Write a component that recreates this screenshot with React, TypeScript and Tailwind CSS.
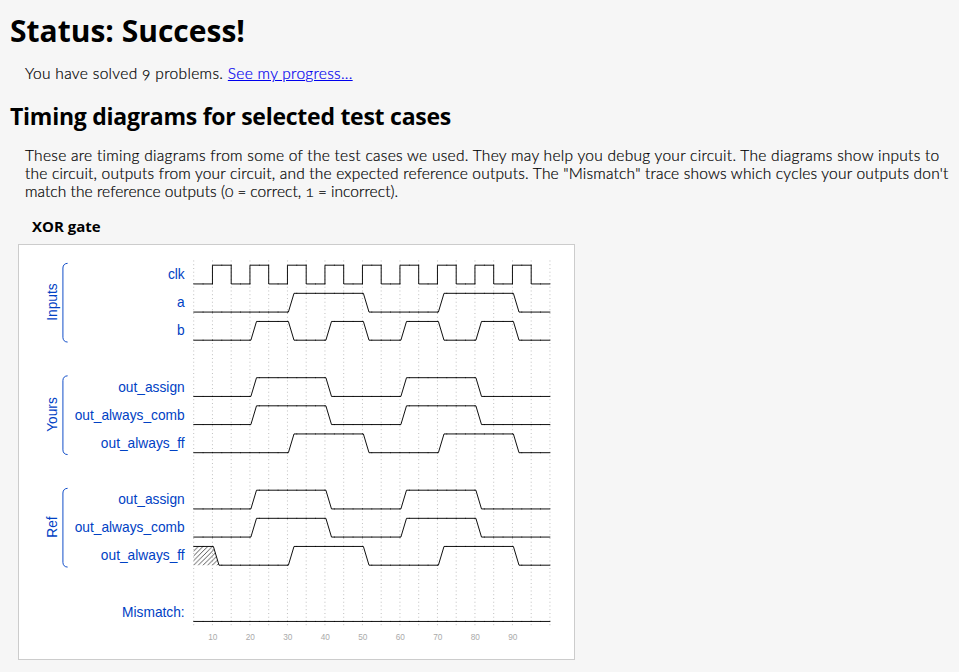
import React from "react";

type Trace = { label: string; row: number; highs: [number, number][]; clock?: boolean; unknownUntil?: number };

const CELLS = 19;

const clockHighs: [number, number][] = [1, 3, 5, 7, 9, 11, 13, 15, 17].map((n) => [n, n + 1]);
const assignHighs: [number, number][] = [[3, 7], [11, 15]];
const ffHighs: [number, number][] = [[5, 9], [13, 17]];

const traces: Trace[] = [
  { label: "clk", row: 0, highs: clockHighs, clock: true },
  { label: "a", row: 1, highs: ffHighs },
  { label: "b", row: 2, highs: [[3, 5], [7, 9], [11, 13], [15, 17]] },
  { label: "out_assign", row: 4, highs: assignHighs },
  { label: "out_always_comb", row: 5, highs: assignHighs },
  { label: "out_always_ff", row: 6, highs: ffHighs },
  { label: "out_assign", row: 8, highs: assignHighs },
  { label: "out_always_comb", row: 9, highs: assignHighs },
  { label: "out_always_ff", row: 10, highs: ffHighs, unknownUntil: 1 },
  { label: "Mismatch:", row: 12, highs: [] },
];

const groups = [
  { label: "Inputs", row: 0 },
  { label: "Yours", row: 4 },
  { label: "Ref", row: 8 },
];

// Each cell is 20 units wide and is built from two 10-unit bricks.
function bricks(t: Trace): string[] {
  const high = (c: number) =>
    (t.unknownUntil !== undefined && c < t.unknownUntil) || t.highs.some(([s, e]) => c >= s && c < e);
  const out: string[] = [];
  for (let c = 0; c < CELLS; c++) {
    const x = c * 20;
    const y = high(c) ? 0 : 20;
    const before = c > 0 ? (high(c - 1) ? 0 : 20) : y;
    if (before === y) out.push(`M${x},${y}h10`);
    else if (t.clock) out.push(`M${x},${before}V${y}h10`);
    else out.push(`M${x},${before}h1L${x + 7},${y}h3`);
    out.push(`M${x + 10},${y}h10`);
  }
  return out;
}

function TimingDiagram() {
  return (
    <svg width="555" height="414" viewBox="0 0 555 414" className="block font-['Liberation_Sans',Arial,sans-serif]">
      <defs>
        <pattern id="hatch" width="5" height="5" patternUnits="userSpaceOnUse">
          <path d="M-1,6 6,-1 M-1,1 1,-1 M4,6 6,4" stroke="#000" strokeWidth="0.7" />
        </pattern>
      </defs>
      <g transform="translate(174.7 20.2) scale(0.9375)">
        {Array.from({ length: CELLS + 1 }, (_, i) => (
          <path key={i} d={`M${i * 20},-5V385`} stroke="#888" strokeWidth="0.6" strokeDasharray="1,3" />
        ))}
        {Array.from({ length: 9 }, (_, i) => (
          <text key={i} x={20.3 + i * 40} y="399.5" textAnchor="middle" fontSize="8.8" fill="#aaa">
            {(i + 1) * 10}
          </text>
        ))}
        {traces.map((t) => (
          <g key={t.row} transform={`translate(0 ${t.row * 30})`}>
            <text x="-9.6" y="14.76" textAnchor="end" fontSize="14.667" fill="#0041c4">
              {t.label}
            </text>
            {t.unknownUntil && <path d="M0,0H21L27,20H0z" fill="url(#hatch)" />}
            {bricks(t).map((d, i) => (
              <path key={i} d={d} fill="none" stroke="#000" strokeLinecap="round" />
            ))}
          </g>
        ))}
        {groups.map((g) => (
          <g key={g.label} fill="none">
            <path d={`M-134.5,${g.row * 30 - 2}c-3,0 -5,2 -5,5v74c0,3 2,5 5,5`} stroke="#0041c4" />
            <text
              transform={`translate(-146 ${g.row * 30 + 39.3}) rotate(-90)`}
              textAnchor="middle"
              fontSize="14.667"
              fill="#0041c4"
            >
              {g.label}
            </text>
          </g>
        ))}
      </g>
    </svg>
  );
}

export default function App() {
  return (
    <main className="h-[672px] w-[959px] overflow-hidden bg-[#f6f6f6] text-black font-['Open_Sans',sans-serif]">
      <h1 className="pt-[10px] pl-[10px] text-[30px] leading-[41px] font-bold">Status: Success!</h1>
      <p className="mt-[13px] pl-[25px] font-['Lato',sans-serif] text-[15.5px] leading-[18px] font-light oldstyle-nums whitespace-nowrap [-webkit-text-stroke:0.2px]">
        <span className="tracking-[0.33px]">You have solved 9 problems. </span>
        <a href="#" className="tracking-[0.28px] text-[#0000ee] underline">See my progress...</a>
      </p>
      <h2 className="mt-[18px] pl-[10px] text-[23px] leading-[32px] font-bold tracking-[-0.26px]">Timing diagrams for selected test cases</h2>
      <p className="mt-[14px] flex flex-col items-start pl-[25px] font-['Lato',sans-serif] text-[15.5px] leading-[18px] font-light oldstyle-nums whitespace-nowrap [-webkit-text-stroke:0.2px]">
        <span className="tracking-[0.28px]">These are timing diagrams from some of the test cases we used. They may help you debug your circuit. The diagrams show inputs to</span>
        <span className="tracking-[0.19px]">the circuit, outputs from your circuit, and the expected reference outputs. The "Mismatch" trace shows which cycles your outputs don't</span>
        <span className="tracking-[0.06px]">match the reference outputs (0 = correct, 1 = incorrect).</span>
      </p>
      <h3 className="mt-[16px] pl-[32px] text-[15px] leading-[20px] font-bold">XOR gate</h3>
      <div className="mt-[8px] ml-[18px] h-[416px] w-[557px] border border-[#ccc] bg-white">
        <TimingDiagram />
      </div>
    </main>
  );
}
